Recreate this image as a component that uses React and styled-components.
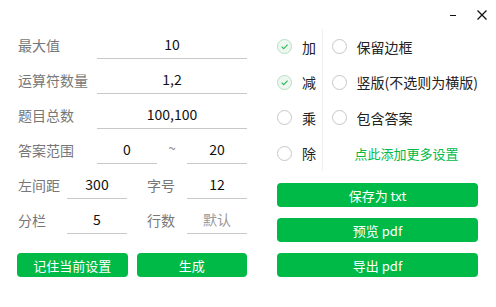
import React from 'react';
import styled, { createGlobalStyle } from 'styled-components';

const GREEN = '#00ba48';

const Global = createGlobalStyle`
  html, body {
    margin: 0;
    padding: 0;
    background: #fff;
  }
  body {
    font-family: "Noto Sans CJK SC", "Noto Sans", sans-serif;
    font-size: 14px;
  }
`;

const Window = styled.div`
  width: 496px;
  height: 307px;
  background: #fff;
  display: flex;
  flex-direction: column;
  overflow: hidden;
`;

const TitleBar = styled.div`
  height: 29px;
  display: flex;
  justify-content: flex-end;
  align-items: center;
  gap: 17px;
  padding-right: 8px;
  box-sizing: border-box;
`;

const WinBtn = styled.span`
  display: flex;
  width: 12px;
  height: 12px;
  align-items: center;
  justify-content: center;
`;

const Body = styled.div`
  display: flex;
  padding-left: 17px;
  gap: 30px;
`;

const Left = styled.div`
  width: 230px;
  display: flex;
  flex-direction: column;
  gap: 6px;
  padding-top: 1px;
`;

const Row = styled.div`
  display: flex;
  height: 29px;
  align-items: stretch;
`;

const Label = styled.div`
  width: ${p => p.w || 80}px;
  padding-left: ${p => p.pad || 1}px;
  box-sizing: border-box;
  display: flex;
  align-items: center;
  color: #777;
  font-size: 14px;
  white-space: nowrap;
`;

const Input = styled.div`
  ${p => (p.w ? `width: ${p.w}px;` : 'flex: 1;')}
  box-sizing: border-box;
  border-bottom: 1px solid #c8c8c8;
  display: flex;
  align-items: center;
  justify-content: center;
  color: ${p => (p.placeholder ? '#999' : '#111')};
  font-size: 14px;
  padding-bottom: 1px;
`;

const Tilde = styled.div`
  width: 30px;
  display: flex;
  align-items: center;
  justify-content: center;
  color: #888;
  font-size: 13px;
  padding-bottom: 4px;
  box-sizing: border-box;
`;

const ButtonRow = styled.div`
  display: flex;
  gap: 9px;
  margin-top: 13px;
`;

const Button = styled.div`
  flex: ${p => (p.stack ? 'none' : '1')};
  height: 24px;
  border-radius: 4px;
  background: ${GREEN};
  color: #fff;
  font-size: 13px;
  display: flex;
  align-items: center;
  justify-content: center;
`;

const Right = styled.div`
  width: 201px;
  display: flex;
  flex-direction: column;
`;

const Options = styled.div`
  display: flex;
`;

const OptCol = styled.div`
  display: flex;
  flex-direction: column;
  ${p => (p.first ? 'width: 51px; border-right: 1px solid #eee;' : 'flex: 1; padding-left: 9px;')}
  box-sizing: border-box;
`;

const Opt = styled.div`
  height: 35.5px;
  display: flex;
  align-items: center;
  gap: 10px;
  color: #222;
  font-size: 14px;
  white-space: nowrap;
`;

const RadioIcon = styled.svg`
  flex: none;
  width: 15px;
  height: 15px;
  display: block;
`;

const Link = styled.div`
  height: 35.5px;
  display: flex;
  align-items: center;
  padding-left: 23px;
  color: ${GREEN};
  font-size: 13px;
`;

const ActionList = styled.div`
  display: flex;
  flex-direction: column;
  gap: 11px;
  margin-top: 12px;
`;

const Radio = ({ checked }) => (
  <RadioIcon viewBox="0 0 15 15">
    <circle
      cx="7.5"
      cy="7.5"
      r="7"
      fill={checked ? '#eef8f1' : '#fff'}
      stroke={checked ? '#b5dfc1' : '#c6c6c6'}
      strokeWidth="1"
    />
    {checked && (
      <path d="M4.6 7.6 L6.7 9.7 L10.6 5.6" fill="none" stroke="#2fb75a" strokeWidth="1.1" />
    )}
  </RadioIcon>
);

export default function App() {
  return (
    <Window>
      <Global />
      <TitleBar>
        <WinBtn>
          <svg width="8" height="12" viewBox="0 0 8 12">
            <line x1="1" y1="6.5" x2="7" y2="6.5" stroke="#111" strokeWidth="1" />
          </svg>
        </WinBtn>
        <WinBtn>
          <svg width="12" height="12" viewBox="0 0 12 12">
            <path d="M1.5 1.5 L10.5 10.5 M10.5 1.5 L1.5 10.5" stroke="#111" strokeWidth="1.3" />
          </svg>
        </WinBtn>
      </TitleBar>
      <Body>
        <Left>
          <Row>
            <Label>最大值</Label>
            <Input>10</Input>
          </Row>
          <Row>
            <Label>运算符数量</Label>
            <Input>1,2</Input>
          </Row>
          <Row>
            <Label>题目总数</Label>
            <Input>100,100</Input>
          </Row>
          <Row>
            <Label>答案范围</Label>
            <Input w={60}>0</Input>
            <Tilde>~</Tilde>
            <Input w={60}>20</Input>
          </Row>
          <Row>
            <Label w={50}>左间距</Label>
            <Input w={60}>300</Input>
            <Label w={60} pad={20}>字号</Label>
            <Input w={60}>12</Input>
          </Row>
          <Row>
            <Label w={50}>分栏</Label>
            <Input w={60}>5</Input>
            <Label w={60} pad={20}>行数</Label>
            <Input w={60} placeholder="1">默认</Input>
          </Row>
          <ButtonRow>
            <Button>记住当前设置</Button>
            <Button>生成</Button>
          </ButtonRow>
        </Left>
        <Right>
          <Options>
            <OptCol first>
              <Opt><Radio checked />加</Opt>
              <Opt><Radio checked />减</Opt>
              <Opt><Radio />乘</Opt>
              <Opt><Radio />除</Opt>
            </OptCol>
            <OptCol>
              <Opt><Radio />保留边框</Opt>
              <Opt><Radio />竖版(不选则为横版)</Opt>
              <Opt><Radio />包含答案</Opt>
              <Link>点此添加更多设置</Link>
            </OptCol>
          </Options>
          <ActionList>
            <Button stack>保存为 txt</Button>
            <Button stack>预览 pdf</Button>
            <Button stack>导出 pdf</Button>
          </ActionList>
        </Right>
      </Body>
    </Window>
  );
}
